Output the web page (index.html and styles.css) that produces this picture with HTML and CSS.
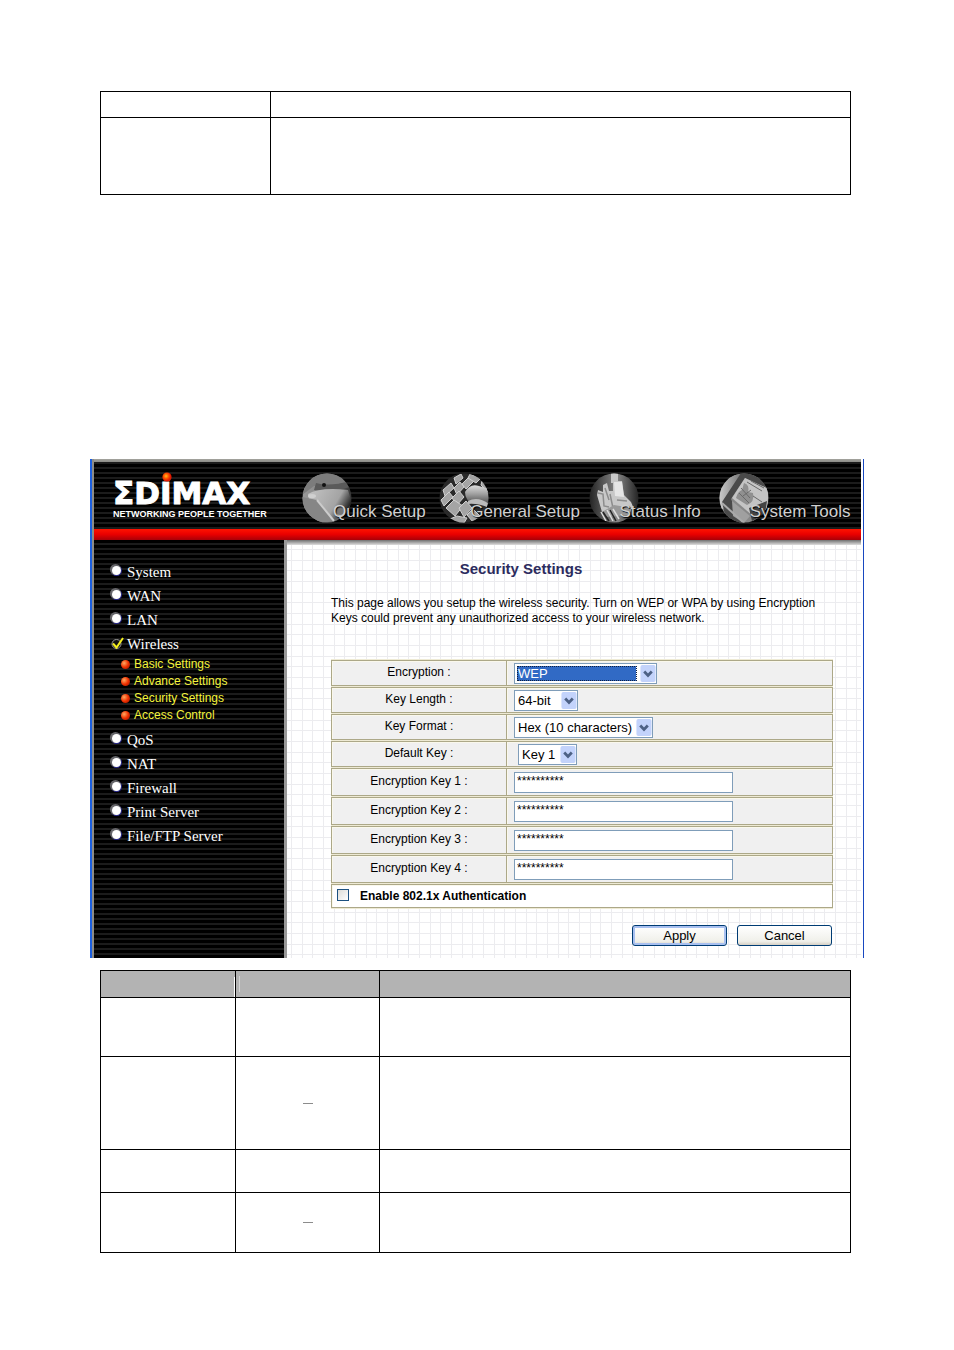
FILE: index.html
```html
<!DOCTYPE html>
<html lang="en">
<head>
<meta charset="utf-8">
<title>Security Settings</title>
<link rel="stylesheet" href="styles.css">
</head>
<body>
<div class="document">
  <table class="grid-table intro-table">
    <colgroup><col class="intro-name"><col></colgroup>
    <tr class="row-short"><td></td><td></td></tr>
    <tr class="row-tall"><td></td><td></td></tr>
  </table>

  <div class="panel">
    <header class="banner">
      <a class="brand" href="#">
        <span class="brand-name">ΣDIMAX<svg class="brand-dot" viewBox="0 0 10 10" aria-hidden="true"><defs><radialGradient id="dot" cx=".4" cy=".4"><stop offset="0" stop-color="#ffc020"/><stop offset=".5" stop-color="#ff5a00"/><stop offset="1" stop-color="#e01800"/></radialGradient></defs><circle cx="5" cy="5" r="4.6" fill="url(#dot)"/></svg></span>
        <span class="brand-tag">NETWORKING PEOPLE TOGETHER</span>
      </a>
      <nav class="topnav">
        <a href="#"><svg viewBox="0 0 50 50" aria-hidden="true">
          <defs>
            <clipPath id="disc"><circle cx="25" cy="25" r="24.5"/></clipPath>
            <linearGradient id="q1" x1="0" x2="1"><stop offset="0" stop-color="#9a9a9a"/><stop offset=".5" stop-color="#808080"/><stop offset="1" stop-color="#333"/></linearGradient>
            <linearGradient id="q2" x1="0" y1="0" x2="1" y2=".4"><stop offset="0" stop-color="#c4c4c4"/><stop offset=".7" stop-color="#a4a4a4"/><stop offset="1" stop-color="#222"/></linearGradient>
          </defs>
          <g clip-path="url(#disc)">
            <rect width="50" height="50" fill="url(#q1)"/>
            <path d="M0 0H50V9L30 12 12 13 0 22Z" fill="#7c7c7c"/>
            <path d="M14 10 Q28 14 48 8 V14 Q28 20 12 17Z" fill="#5a5a5a"/>
            <path d="M6 21 Q18 14 46 17 L50 30 40 42 31 47 17 28 7 26Z" fill="url(#q2)"/>
            <path d="M0 24 L15 27 31 48 18 50 0 38Z" fill="#868686"/>
            <path d="M15 27 32 48" stroke="#ccc" stroke-width="2"/>
            <ellipse cx="10" cy="23" rx="4" ry="2" fill="#d0d0d0"/>
            <circle cx="22" cy="12" r="2" fill="#111"/>
            <circle cx="38" cy="38" r="5" fill="#777" stroke="#b8b8b8" stroke-width="2"/>
          </g></svg><span>Quick Setup</span></a>
        <a href="#"><svg viewBox="0 0 50 50" aria-hidden="true">
          <defs><linearGradient id="g1" x1="0" y1="0" x2="0" y2="1"><stop offset="0" stop-color="#ddd"/><stop offset=".4" stop-color="#a0a0a0"/><stop offset="1" stop-color="#333"/></linearGradient></defs>
          <g clip-path="url(#disc)">
            <rect width="50" height="50" fill="#2a2a2a"/>
            <g fill="#a4a4a4" stroke="#d0d0d0">
              <path d="M15 5 22 1 24 5 17 11Z"/><path d="M23 11 30 4 35 8 27 16Z"/><path d="M15 15 21 9 25 14 18 22Z"/>
              <path d="M4 17 12 10 15 15 6 23Z"/><path d="M2 27 10 19 14 24 5 33Z"/><path d="M13 25 20 18 25 24 18 32Z"/>
              <path d="M7 35 15 27 24 33 16 43Z"/><path d="M20 35 27 28 33 35 25 44Z"/><path d="M11 46 18 43 28 45 25 50 14 50Z"/>
              <path d="M31 1 42 5 37 10 29 5Z"/><path d="M28 42 34 36 41 43 34 49Z"/><path d="M43 8 50 14 50 20 42 12Z"/>
            </g>
            <path d="M26 19 Q31 10 40 13 L50 16V34Q42 30 35 31 26 28 26 19Z" fill="url(#g1)"/>
            <path d="M29 28Q39 23 50 31V35Q39 30 29 31Z" fill="#bbb"/>
          </g></svg><span>General Setup</span></a>
        <a href="#"><svg viewBox="0 0 50 50" aria-hidden="true">
          <defs><linearGradient id="s1" x1="0" x2="1"><stop offset="0" stop-color="#222"/><stop offset=".55" stop-color="#888"/><stop offset="1" stop-color="#222"/></linearGradient></defs>
          <g clip-path="url(#disc)">
            <rect width="50" height="50" fill="url(#s1)"/>
            <path d="M22 0H29V10H22Z" fill="#c8c8c8"/>
            <path d="M14 12 18 10 20 18 24 18 24 8 33 8 35 22 42 29 45 36 28 36 13 39 8 22 9 17 14 19Z" fill="#c8c8c8"/>
            <path d="M25 9H33L35 24 26 23Z" fill="#e6e6e6"/>
            <path d="M9 20 14 21 15 33 20 34 M16 15 20 27 M21 21 24 35 M28 27 38 28" fill="none" stroke="#8c8c8c" stroke-width="1.5"/>
            <path d="M13 39 25 32 43 35 40 42 17 44Z" fill="#999"/>
            <path d="M12 39 17 48 M18 37 24 48 M24 36 30 46" stroke="#ddd" stroke-width="1.5"/>
            <path d="M14 39 20 48 M21 37 27 48" stroke="#222" stroke-width="1.5"/>
          </g></svg><span>Status Info</span></a>
        <a href="#"><svg viewBox="0 0 50 50" aria-hidden="true">
          <defs><linearGradient id="t1" x1="0" y1="0" x2="1" y2="0"><stop offset="0" stop-color="#ccc"/><stop offset="1" stop-color="#777"/></linearGradient></defs>
          <g clip-path="url(#disc)">
            <rect width="50" height="50" fill="#888"/>
            <path d="M0 0H22L12 18 7 34 0 38Z" fill="url(#t1)"/>
            <path d="M22 0 50 0V18L26 5 12 26 23 50H8L3 29Z" fill="#4a4a4a"/>
            <path d="M26 5 50 16 48 36 34 43 13 25Z" fill="#c4c4c4"/>
            <path d="M25 10 Q31 12 29 19 L34 20Q36 29 28 32L17 25Q19 18 23 17Z" fill="#909090"/>
            <path d="M28 9 43 18 M32 8 45 15 M22 15 31 25 M20 20 30 30 M24 23 32 17 M34 23 43 29" stroke="#6a6a6a"/>
            <path d="M13 28 31 43 25 50 14 43Z" fill="#a0a0a0"/>
            <path d="M3 30 25 50" stroke="#aaa" stroke-width="2"/>
            <path d="M30 35 48 28 46 41 33 48Z" fill="#444"/>
          </g></svg><span>System Tools</span></a>
      </nav>
    </header>

    <div class="body">
      <nav class="sidebar">
        <ul class="menu">
          <li><a href="#"><i class="bullet"></i>System</a></li>
          <li><a href="#"><i class="bullet"></i>WAN</a></li>
          <li><a href="#"><i class="bullet"></i>LAN</a></li>
          <li><a href="#"><svg class="tick" viewBox="0 0 13 13" aria-hidden="true"><circle cx="5.5" cy="7" r="4.5" fill="#111" stroke="#999"/><path d="M2 6.5 5.5 10.500 12 1" fill="none" stroke="#f4f020" stroke-width="2"/></svg>Wireless</a>
            <ul class="submenu">
              <li><a href="#"><i class="ball"></i>Basic Settings</a></li>
              <li><a href="#"><i class="ball"></i>Advance Settings</a></li>
              <li><a href="#"><i class="ball"></i>Security Settings</a></li>
              <li><a href="#"><i class="ball"></i>Access Control</a></li>
            </ul></li>
          <li><a href="#"><i class="bullet"></i>QoS</a></li>
          <li><a href="#"><i class="bullet"></i>NAT</a></li>
          <li><a href="#"><i class="bullet"></i>Firewall</a></li>
          <li><a href="#"><i class="bullet"></i>Print Server</a></li>
          <li><a href="#"><i class="bullet"></i>File/FTP Server</a></li>
        </ul>
      </nav>

      <main class="main">
        <h1>Security Settings</h1>
        <p class="intro">This page allows you setup the wireless security. Turn on WEP or WPA by using Encryption Keys could prevent any unauthorized access to your wireless network.</p>
        <form>
          <table class="settings">
            <colgroup><col class="settings-name"><col></colgroup>
            <tr><th><label for="enc">Encryption :</label></th><td><span class="drop drop-wide is-focused"><select id="enc"><option>WEP</option></select><svg viewBox="0 0 16 18" aria-hidden="true"><rect width="16" height="18" rx="2"/><path d="M4 7 8 11 12 7"/></svg></span></td></tr>
            <tr><th><label for="len">Key Length :</label></th><td><span class="drop drop-small"><select id="len"><option>64-bit</option></select><svg viewBox="0 0 16 18" aria-hidden="true"><rect width="16" height="18" rx="2"/><path d="M4 7 8 11 12 7"/></svg></span></td></tr>
            <tr><th><label for="fmt">Key Format :</label></th><td><span class="drop drop-medium"><select id="fmt"><option>Hex (10 characters)</option></select><svg viewBox="0 0 16 18" aria-hidden="true"><rect width="16" height="18" rx="2"/><path d="M4 7 8 11 12 7"/></svg></span></td></tr>
            <tr><th><label for="def">Default Key :</label></th><td class="indent"><span class="drop drop-key"><select id="def"><option>Key 1</option></select><svg viewBox="0 0 16 18" aria-hidden="true"><rect width="16" height="18" rx="2"/><path d="M4 7 8 11 12 7"/></svg></span></td></tr>
            <tr class="key-row"><th><label for="k1">Encryption Key 1 :</label></th><td><input class="key" id="k1" type="text" value="**********"></td></tr>
            <tr class="key-row"><th><label for="k2">Encryption Key 2 :</label></th><td><input class="key" id="k2" type="text" value="**********"></td></tr>
            <tr class="key-row"><th><label for="k3">Encryption Key 3 :</label></th><td><input class="key" id="k3" type="text" value="**********"></td></tr>
            <tr class="key-row"><th><label for="k4">Encryption Key 4 :</label></th><td><input class="key" id="k4" type="text" value="**********"></td></tr>
            <tr class="auth-row"><td colspan="2"><div class="auth"><input id="auth" type="checkbox"><label for="auth">Enable 802.1x Authentication</label></div></td></tr>
          </table>
          <div class="actions">
            <button class="btn btn-default" type="submit">Apply</button>
            <button class="btn" type="button">Cancel</button>
          </div>
        </form>
      </main>
    </div>
  </div>

  <table class="grid-table detail-table">
    <colgroup><col class="detail-name"><col class="detail-value"><col></colgroup>
    <tr class="head"><td class="head-first"></td><td><span class="head-mark"></span></td><td></td></tr>
    <tr class="h59"><td></td><td></td><td></td></tr>
    <tr class="h93"><td></td><td><span class="dash"></span></td><td></td></tr>
    <tr class="h43"><td></td><td></td><td></td></tr>
    <tr class="h60"><td></td><td><span class="dash"></span></td><td></td></tr>
  </table>
</div>
</body>
</html>
```

FILE: styles.css
```css
* { box-sizing: border-box; }

body {
  margin: 0;
  background: #fff;
  color: #000;
  font-family: "Liberation Sans", Arial, sans-serif;
  font-size: 12px;
}

a { color: inherit; text-decoration: none; }
ul { list-style: none; margin: 0; padding: 0; }

.document { padding: 91px 103px 96px 100px; }

/* ruled tables above and below the panel */
.grid-table { width: 100%; border-collapse: collapse; table-layout: fixed; }
.grid-table td { border: 1px solid #000; padding: 0; vertical-align: middle; }
.intro-name { width: 170px; }
.row-short { height: 26px; }
.row-tall { height: 77px; }
.detail-name { width: 135px; }
.detail-value { width: 144px; }
.head { height: 27px; background: #b3b3b3; }
.head-first { background: linear-gradient(#fff, #fff) 100% 100% / 1px 20px no-repeat; }
.h59 { height: 59px; }
.h93 { height: 93px; }
.h43 { height: 43px; }
.h60 { height: 60px; }
.head-mark { display: block; width: 1px; height: 16px; margin-left: 3px; background: #d4d4d4; }
.dash { display: block; width: 10px; height: 1px; margin: 0 auto; background: #8c8c8c; }

/* router panel */
.panel {
  margin: 264px -13px 12px -10px;
  border-left: 2px solid #1c5fe0;
  border-right: 1px solid #1848c0;
  padding-right: 2px;
  background: #fff;
}

.banner {
  display: flex;
  align-items: flex-start;
  height: 81px;
  padding: 12px 6px 0 19px;
  border-left: 2px solid #8c8c88;
  background:
    linear-gradient(#a4a49e, #8c8c88) 0 0 / 100% 3px no-repeat,
    linear-gradient(#ff1200, #e80000 50%, #a80008) 0 100% / 100% 11px no-repeat,
    repeating-linear-gradient(#000 0 3px, #1c1c1c 3px 5px);
}

.brand { display: flex; flex-direction: column; width: 189px; color: #fff; }
.brand-name {
  position: relative;
  height: 36px;
  padding-top: 8px;
  font: bold 31px/28px "DejaVu Sans", sans-serif;
  -webkit-text-stroke: 1px #fff;
}
.brand-dot { position: absolute; left: 49px; top: 1px; width: 10px; height: 10px; }
.brand-tag { margin-top: 2px; font-size: 9px; font-weight: bold; line-height: 10px; white-space: nowrap; }

.topnav { flex: 1; display: grid; grid-template-columns: 137fr 149fr 130fr 136fr; }
.topnav a { display: flex; align-items: flex-end; color: #d0d0d0; font-size: 17px; line-height: 22px; white-space: nowrap; }
.topnav svg { flex: none; width: 50px; height: 50px; margin-top: 2px; }
.topnav span { margin-left: -19px; text-shadow: 1px 1px 1px #000; }

.body { display: flex; }

.sidebar {
  flex: none;
  width: 195px;
  padding: 20px 0 0 17px;
  border-left: 2px solid #8c8c88;
  border-right: 3px solid #999;
  background: repeating-linear-gradient(#000 0 3px, #1c1c1c 3px 5px);
}
.menu { color: #fff; font: 15px/24px "Liberation Serif", "Times New Roman", serif; }
.menu a { display: flex; align-items: center; }
.bullet {
  width: 9px;
  height: 9px;
  margin: 0 6px 4px 1px;
  border-radius: 50%;
  background: #fff;
  box-shadow: -1px -1px 0 1px #66666a, 0 0 0 1px #2a2a90;
}
.tick { width: 13px; height: 13px; margin: 0 3px 2px 0; }
.submenu { padding: 0 0 4px 10px; color: #f4f43c; font: 12px/17px "Liberation Sans", Arial, sans-serif; }
.submenu li { height: 17px; }
.submenu li a { height: 16px; }
.ball { width: 9px; height: 9px; margin: 0 4px 0 0; border-radius: 50%; background: radial-gradient(circle at 35% 35%, #ffa860, #f03000 50%, #901000); }

.main {
  flex: 1;
  padding: 20px 28px 12px 44px;
  background:
    linear-gradient(#707070, #dedede) 0 0 / 100% 5px no-repeat,
    linear-gradient(90deg, #ececef 0 1px, transparent 1px 11px, #ececef 11px 12px, transparent 12px 21px, #ececef 21px 22px, transparent 22px) 4px 0 / 32px 32px,
    linear-gradient(#ececef 0 1px, transparent 1px 11px, #ececef 11px 12px, transparent 12px 21px, #ececef 21px 22px, transparent 22px) 0 9px / 32px 32px,
    #fff;
}
.main h1 { margin: 0; padding-right: 122px; color: #2c2c5e; font-size: 15px; line-height: 18px; text-align: center; }
.intro { margin: 18px 0 33px; line-height: 15px; }

.settings { width: 100%; border-collapse: separate; border-spacing: 0 1px; table-layout: fixed; background: #eeead4; }
.settings-name { width: 175px; }
.settings tr { height: 26px; }
.settings .key-row { height: 28px; }
.settings th, .settings td { padding: 0; border: 1px solid #aca888; background: #f0f0f0; box-shadow: inset 1px 1px #faf8ec; }
.settings th { border-right: 0; font-weight: normal; text-align: center; }
.settings th label { display: block; padding-bottom: 2px; }
.settings td { padding-left: 7px; }
.settings .indent { padding-left: 11px; }
.settings .auth-row { height: 24px; }
.settings .auth-row td { padding-left: 5px; background: #fff; }

.drop { position: relative; display: block; height: 21px; }
.drop select {
  appearance: none;
  display: block;
  width: 100%;
  height: 21px;
  padding: 0 18px 0 3px;
  border: 1px solid #7f9db9;
  border-radius: 0;
  background: #fff;
  color: #000;
  font: 13px "Liberation Sans", Arial, sans-serif;
}
.drop svg { position: absolute; right: 1px; top: 2px; width: 16px; height: 17px; pointer-events: none; }
.drop rect { fill: #c3d3fb; }
.drop path { fill: none; stroke: #4d6185; stroke-width: 3; }
.drop-wide { width: 143px; }
.drop-small { width: 64px; }
.drop-medium { width: 139px; }
.drop-key { width: 59px; }
.is-focused select { color: #fff; background: linear-gradient(#316ac5, #316ac5) 2px 2px / 119px 15px no-repeat #fff; }
.is-focused::after { content: ""; position: absolute; inset: 3px 20px 3px 3px; border: 1px dotted #102040; pointer-events: none; }

.key {
  display: block;
  width: 219px;
  height: 21px;
  padding: 0 2px 2px;
  border: 1px solid #7f9db9;
  background: #fff;
  font: 12px "Liberation Sans", Arial, sans-serif;
}

.auth { display: flex; align-items: center; font-weight: bold; }
.auth input {
  appearance: none;
  width: 12px;
  height: 12px;
  margin: 0 11px 2px 0;
  border: 1px solid #1c5180;
  background: linear-gradient(135deg, #dcdcd7, #fff);
}

.actions { display: flex; justify-content: flex-end; gap: 10px; margin-top: 16px; padding-right: 1px; }
.btn {
  width: 95px;
  height: 21px;
  padding: 0;
  border: 1px solid #003c74;
  border-radius: 3px;
  background: linear-gradient(#fff, #f0f0ea 80%, #d6d0c5);
  color: #000;
  font: 13px/17px "Liberation Sans", Arial, sans-serif;
}
.btn-default { box-shadow: inset 0 0 0 2px #a8c0f0; }
```
